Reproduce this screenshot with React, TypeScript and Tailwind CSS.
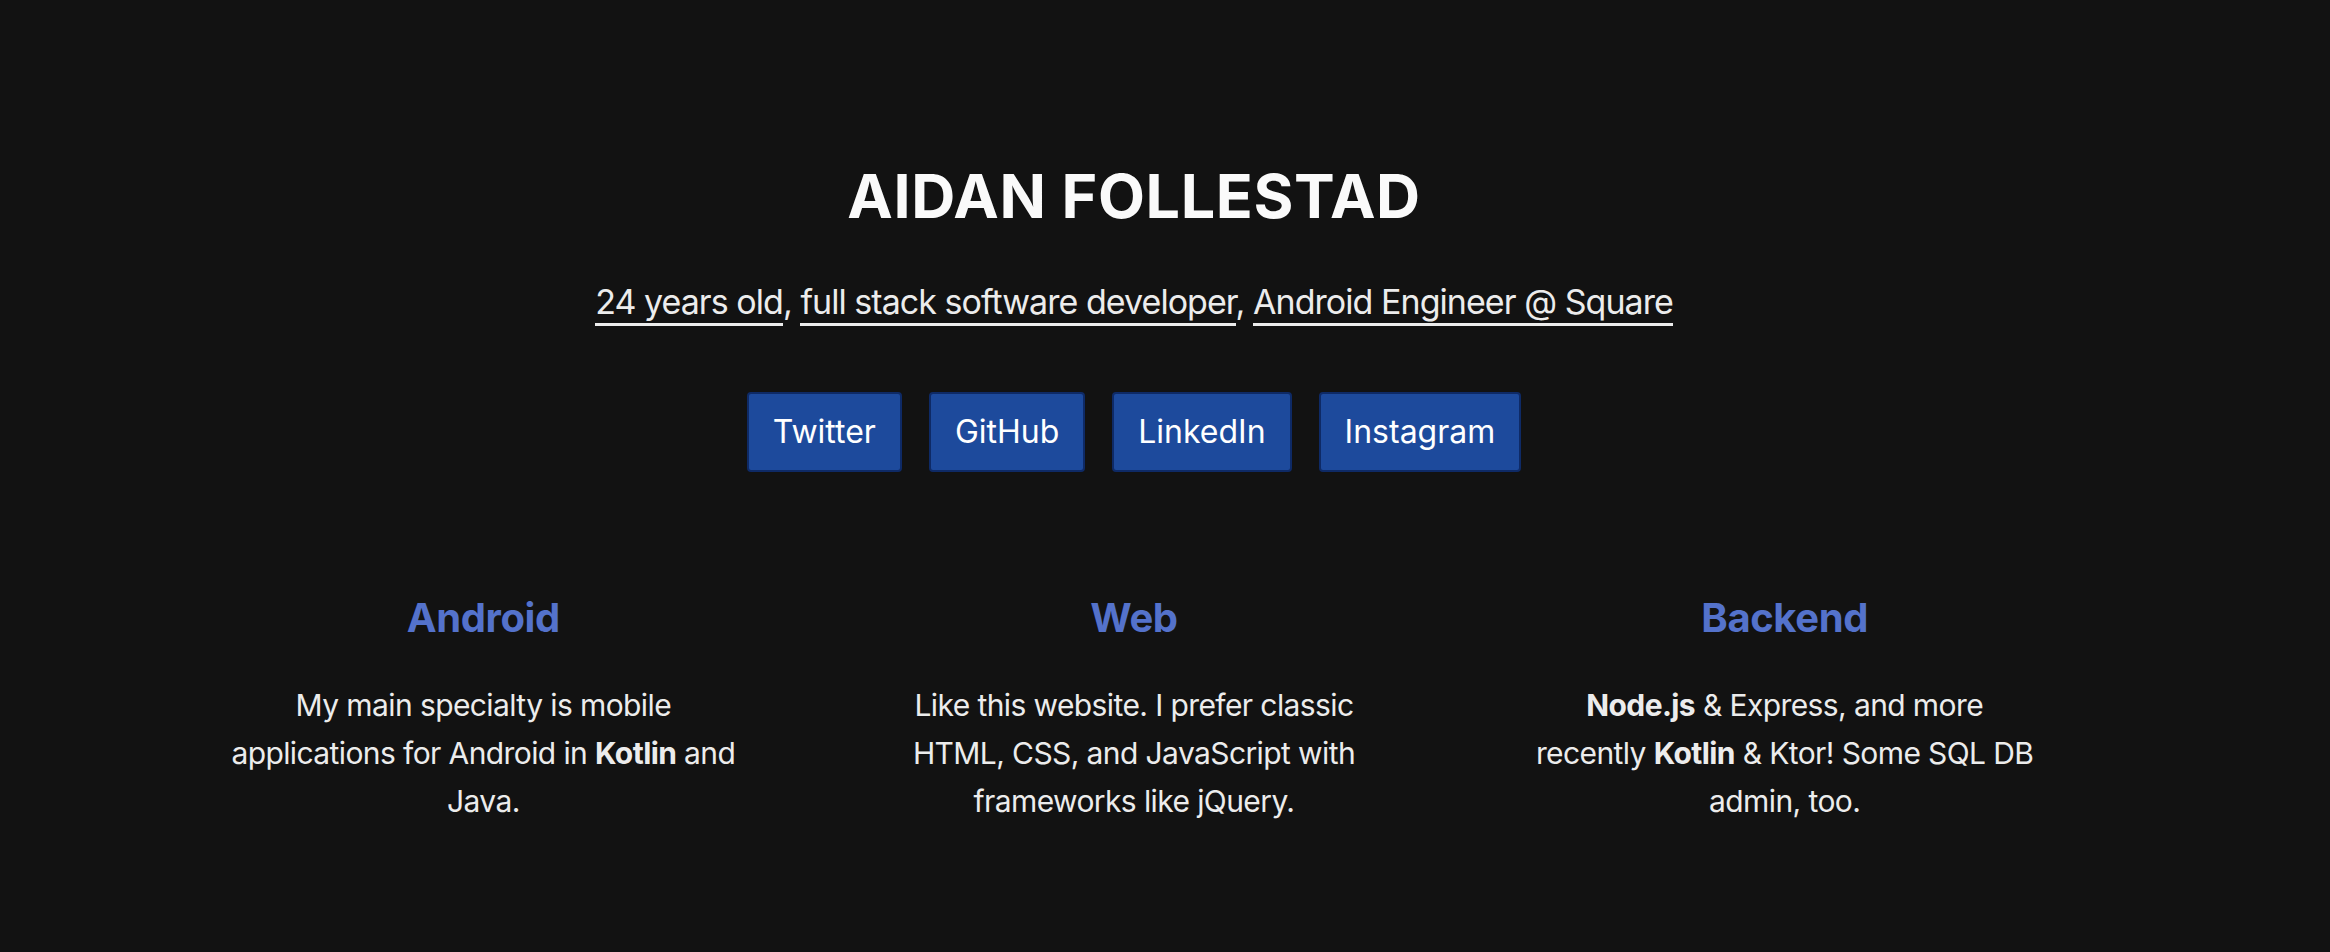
import React from "react";

const links = ["Twitter", "GitHub", "LinkedIn", "Instagram"];

function Skill({ title, children }: { title: string; children: React.ReactNode }) {
  return (
    <div className="flex flex-col items-center text-center">
      <h2 className="text-[40px] font-bold leading-[48px] tracking-[-0.01em] text-[#5472cb]">{title}</h2>
      <p className="mt-[39px] max-w-[508px] text-[30px] leading-[48px] tracking-[-0.02em] text-[#ececec]">
        {children}
      </p>
    </div>
  );
}

export default function App() {
  return (
    <main
      className="min-h-screen bg-[#121212] pr-[62px] text-white"
      style={{ fontFamily: "Inter, 'Noto Sans', sans-serif" }}
    >
      <div className="flex flex-col items-center pt-[160px] pb-24">
        <h1 className="text-[61px] font-bold leading-[73px] tracking-[0.01em] text-[#fafafa]">AIDAN FOLLESTAD</h1>

        <p className="mt-[45px] text-[34px] leading-[48px] tracking-[-0.028em] text-[#ececec]">
          <span className="border-b-[3px] border-[#ececec] pb-[1px]">24 years old</span>,{" "}
          <span className="border-b-[3px] border-[#ececec] pb-[1px]">full stack software developer</span>,{" "}
          <span className="border-b-[3px] border-[#ececec] pb-[1px]">Android Engineer @ Square</span>
        </p>

        <div className="mt-[66px] flex gap-[27px]">
          {links.map((l) => (
            <a
              key={l}
              href="#"
              className="flex h-[80px] items-center rounded-[4px] border-2 border-[#0e2a66] bg-[#1d4a9c] px-[24px] text-[32px] text-white"
            >
              {l}
            </a>
          ))}
        </div>

        <div className="mt-[122px] grid w-[1952px] grid-cols-3">
          <Skill title="Android">
            My main specialty is mobile applications for Android in <b>Kotlin</b> and Java.
          </Skill>
          <Skill title="Web">
            Like this website. I prefer classic HTML, CSS, and JavaScript with frameworks like jQuery.
          </Skill>
          <Skill title="Backend">
            <b>Node.js</b> &amp; Express, and more recently <b>Kotlin</b> &amp; Ktor! Some SQL DB admin, too.
          </Skill>
        </div>
      </div>
    </main>
  );
}
